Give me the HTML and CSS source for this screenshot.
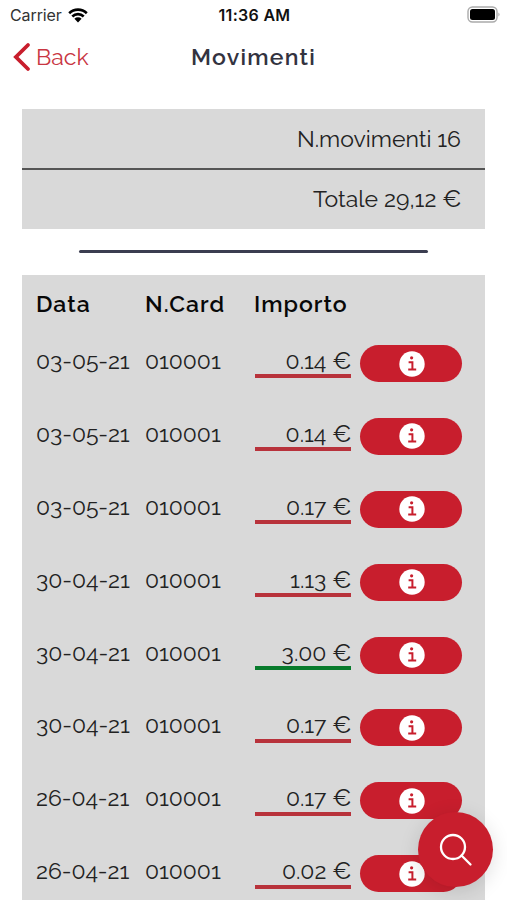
FILE: index.html
```html
<!DOCTYPE html>
<html lang="it">
<head>
<meta charset="utf-8">
<title>Movimenti</title>
<link rel="stylesheet" href="styles.css">
</head>
<body>
<div class="status">
  <div class="carrier"><span class="carrier-name">Carrier</span>
    <svg class="wifi" viewBox="0 0 20 15" width="20" height="15"><path d="M1.2 5.2A12.6 12.6 0 0 1 18.8 5.2M4.3 8.5A8.1 8.1 0 0 1 15.7 8.5" fill="none" stroke="#000" stroke-width="2.6"/><path d="M6.4 10.8A5.1 5.1 0 0 1 13.6 10.8L10 14.6Z"/></svg>
  </div>
  <span class="time">11:36 AM</span>
  <svg class="battery" viewBox="0 0 34 18" width="34" height="18"><rect x="1" y="1" width="29" height="15" rx="4.5" fill="#fff" stroke="#aaa" stroke-width="1.4"/><rect x="3" y="3" width="25" height="11" rx="2.5"/><path d="M31.5 6.5Q33.5 8.5 31.5 10.5Z" fill="#999"/></svg>
</div>
<nav class="nav">
  <a class="back"><svg viewBox="0 0 18 30" width="18" height="30"><path d="M15 3L2.9 15L15 27" fill="none" stroke="#c81e2d" stroke-width="3.8" stroke-linecap="round"/></svg><span>Back</span></a>
  <h1>Movimenti</h1>
</nav>
<section class="summary">
  <div class="line"><span class="count">N.movimenti 16</span></div>
  <div class="line"><span class="total">Totale 29,12 <span class="euro">€</span></span></div>
</section>
<hr>
<section class="list" id="list">
  <div class="head"><span class="h-data">Data</span><span class="h-card">N.Card</span><span class="h-imp">Importo</span></div>
</section>
<button class="search"><svg viewBox="0 0 34 34" width="34" height="34"><circle cx="14" cy="14" r="12" /><path d="M22.5 22.5L31.5 31.5"/></svg></button>
<script src="app.js"></script>
</body>
</html>
```
FILE: styles.css
```css
* { box-sizing: border-box; }
body { margin: 0; height: 900px; overflow: hidden; background: #fff; color: #222; font-family: Raleway, Lato, sans-serif; }
.status { display: grid; grid-template-columns: 1fr auto 1fr; align-items: center; height: 30px; padding: 0 8px 0 10px; font-family: Inter, sans-serif; font-size: 16px; color: #111; }
.carrier { display: flex; align-items: center; gap: 6px; }
.carrier-name { letter-spacing: -0.1px; color: #333; }
.time { font-weight: 600; letter-spacing: .3px; }
.battery { justify-self: end; margin-right: -2px; }
.nav { display: grid; grid-template-columns: 1fr auto 1fr; align-items: center; height: 54px; padding: 0 13px 0 13px; }
.back { display: flex; align-items: center; gap: 5px; color: #c93642; font-size: 23px; }
.back span, h1 { padding-bottom: 2px; }
h1 { margin: 0; font-size: 23px; font-weight: 600; letter-spacing: 1.25px; color: #33333f; }
.summary { margin: 25px 22px 0; background: #d9d9d9; height: 120px; font-size: 23px; }
.line { height: 59px; padding: 0 24px 1px 0; display: flex; justify-content: flex-end; align-items: center; }
.line + .line { height: 61px; padding-bottom: 3px; border-top: 2px solid #555; }
.euro { font-size: 24px; line-height: 0; font-variant-numeric: lining-nums; letter-spacing: -.5px; }
hr { width: 349px; height: 3px; margin: 21px auto 22px; border: 0; border-radius: 2px; background: #3b3d50; }
.list { margin: 0 22px; padding: 0 14px; height: 625px; background: #d9d9d9; }
.head, .row { display: grid; grid-template-columns: 109px 110px 96px 1fr; }
.head { height: 51px; align-items: center; padding-top: 6px; font-size: 23px; font-weight: 600; letter-spacing: 1px; color: #080808; }
.h-imp { margin-left: -1px; }
.row { height: 72.9px; padding-top: 19px; align-items: start; font-size: 23px; line-height: 32px; }
.date, .card { letter-spacing: -.05px; }
.amount { height: 33.4px; border-bottom: 4px solid #b8323b; text-align: right; }
.amount.in { border-color: #087b2c; }
.info { width: 102px; height: 37px; margin-left: 9px; padding-left: 1px; border-radius: 19px; background: #c81e2d; display: flex; align-items: center; justify-content: center; }
.info svg { display: block; }
.search { position: absolute; left: 418px; top: 812px; width: 75px; height: 75px; padding: 0; border: 0; border-radius: 50%; background: #c81e2d; box-shadow: 0 4px 20px rgba(0,0,0,.13); display: flex; align-items: center; justify-content: center; }
.search svg { fill: none; stroke: #fff; stroke-width: 2.3; stroke-linecap: round; }
```
FILE: app.js
```js
const rows = [
  ["03-05-21", "0.14"], ["03-05-21", "0.14"], ["03-05-21", "0.17"], ["30-04-21", "1.13"],
  ["30-04-21", "3.00", true], ["30-04-21", "0.17"], ["26-04-21", "0.17"], ["26-04-21", "0.02"]
];
const icon = '<svg viewBox="0 0 26 26" width="26" height="26"><circle cx="13" cy="13" r="12.7" fill="#fff"/><circle cx="12.6" cy="6.8" r="1.6" fill="#c81e2d"/><path d="M9.6 11.2H13.4V18.6M9.2 18.6H17.2" fill="none" stroke="#c81e2d" stroke-width="2"/></svg>';
document.getElementById("list").insertAdjacentHTML("beforeend", rows.map(([date, amount, income]) =>
  `<div class="row"><span class="date">${date}</span><span class="card">010001</span><span class="amount${income ? " in" : ""}">${amount} <span class="euro">€</span></span><span class="info">${icon}</span></div>`
).join(""));
```
